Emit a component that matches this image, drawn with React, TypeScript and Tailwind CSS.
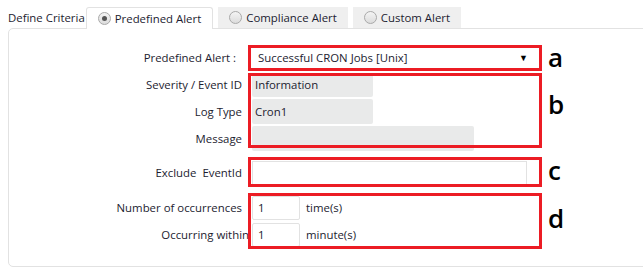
import React from "react"

const Radio = ({ checked }: { checked?: boolean }) => (
  <span className="flex h-[13px] w-[13px] items-center justify-center rounded-full border border-[#a9a9a9] bg-gradient-to-b from-[#f4f4f4] to-[#dcdcdc]">
    {checked ? <span className="h-[5px] w-[5px] rounded-full bg-[#555]" /> : null}
  </span>
)

const Tab = ({ label, active }: { label: string; active?: boolean }) => (
  <div
    className={`flex h-[21px] items-center gap-[4px] px-[11px] ${
      active ? "bg-white border border-b-0 border-[#e2e2e2] rounded-t-[3px] h-[22px] -mb-px relative" : "bg-[#efefef]"
    }`}
  >
    <Radio checked={active} />
    <span>{label}</span>
  </div>
)

const Label = ({ children }: { children: React.ReactNode }) => (
  <div className="w-[233px] shrink-0 text-right whitespace-pre">{children}</div>
)

const RedBox = ({ top, height, letter, letterTop }: { top: number; height: number; letter: string; letterTop: number }) => (
  <>
    <div
      className="absolute left-[248px] w-[294px] border-[3px] border-[#ec1c24] pointer-events-none"
      style={{ top, height }}
    />
    <div
      className="absolute left-[548px] text-[26px] font-semibold leading-none text-black"
      style={{ top: letterTop }}
    >
      {letter}
    </div>
  </>
)

export default function App() {
  return (
    <div className="relative h-[269px] w-[643px] overflow-hidden bg-white font-['Open_Sans',sans-serif] text-[11.4px] text-[#1c1c30]">
      <div className="flex items-end gap-[5px] pl-[8px] pt-[7px]">
        <div className="h-[21px] leading-[21px] -mr-[4px]">Define Criteria</div>
        <Tab label="Predefined Alert" active />
        <Tab label="Compliance Alert" />
        <Tab label="Custom Alert" />
      </div>

      <div className="ml-[8px] w-[660px] h-[239px] border border-[#e2e2e2] rounded-[5px] pt-[16px]">
        <div className="flex items-center h-[26px]">
          <Label>Predefined Alert :  </Label>
          <div className="ml-[10px] flex h-[22px] w-[280px] items-center justify-between pl-[6px] pr-[4px]">
            <span>Successful CRON Jobs [Unix]</span>
            <span className="text-[9px] text-black">▼</span>
          </div>
        </div>

        <div className="mt-[2px] flex flex-col gap-[2px]">
          <div className="flex items-center h-[24px]">
            <Label>Severity / Event ID</Label>
            <div className="ml-[10px] flex h-[24px] w-[121px] items-center rounded-[2px] bg-[#e9eaea] px-[3px]">Information</div>
          </div>
          <div className="flex items-center h-[25px]">
            <Label>Log Type</Label>
            <div className="ml-[10px] flex h-[25px] w-[121px] items-center rounded-[2px] bg-[#e9eaea] px-[3px]">Cron1</div>
          </div>
          <div className="flex items-center h-[25px]">
            <Label>Message</Label>
            <div className="ml-[10px] h-[25px] w-[222px] rounded-[2px] bg-[#e9eaea]" />
          </div>
        </div>

        <div className="mt-[10px] flex items-center h-[24px]">
          <Label>Exclude  EventId</Label>
          <div className="ml-[10px] h-[24px] w-[275px] border border-[#e2e2e2] bg-white" />
        </div>

        <div className="mt-[11px] flex flex-col gap-[3px]">
          <div className="flex items-center h-[24px]">
            <Label>Number of occurrences</Label>
            <div className="ml-[10px] flex h-[24px] w-[48px] items-center rounded-[2px] border border-[#e2e2e2] px-[5px]">1</div>
            <span className="ml-[6px]">time(s)</span>
          </div>
          <div className="flex items-center h-[24px]">
            <div className="w-[240px] shrink-0 text-right">Occurring within</div>
            <div className="ml-[3px] flex h-[24px] w-[48px] items-center rounded-[2px] border border-[#e2e2e2] px-[5px]">1</div>
            <span className="ml-[6px]">minute(s)</span>
          </div>
        </div>
      </div>

      <RedBox top={45} height={26} letter="a" letterTop={44} />
      <RedBox top={73} height={75} letter="b" letterTop={91} />
      <RedBox top={157} height={30} letter="c" letterTop={157} />
      <RedBox top={193} height={56} letter="d" letterTop={205} />
    </div>
  )
}
